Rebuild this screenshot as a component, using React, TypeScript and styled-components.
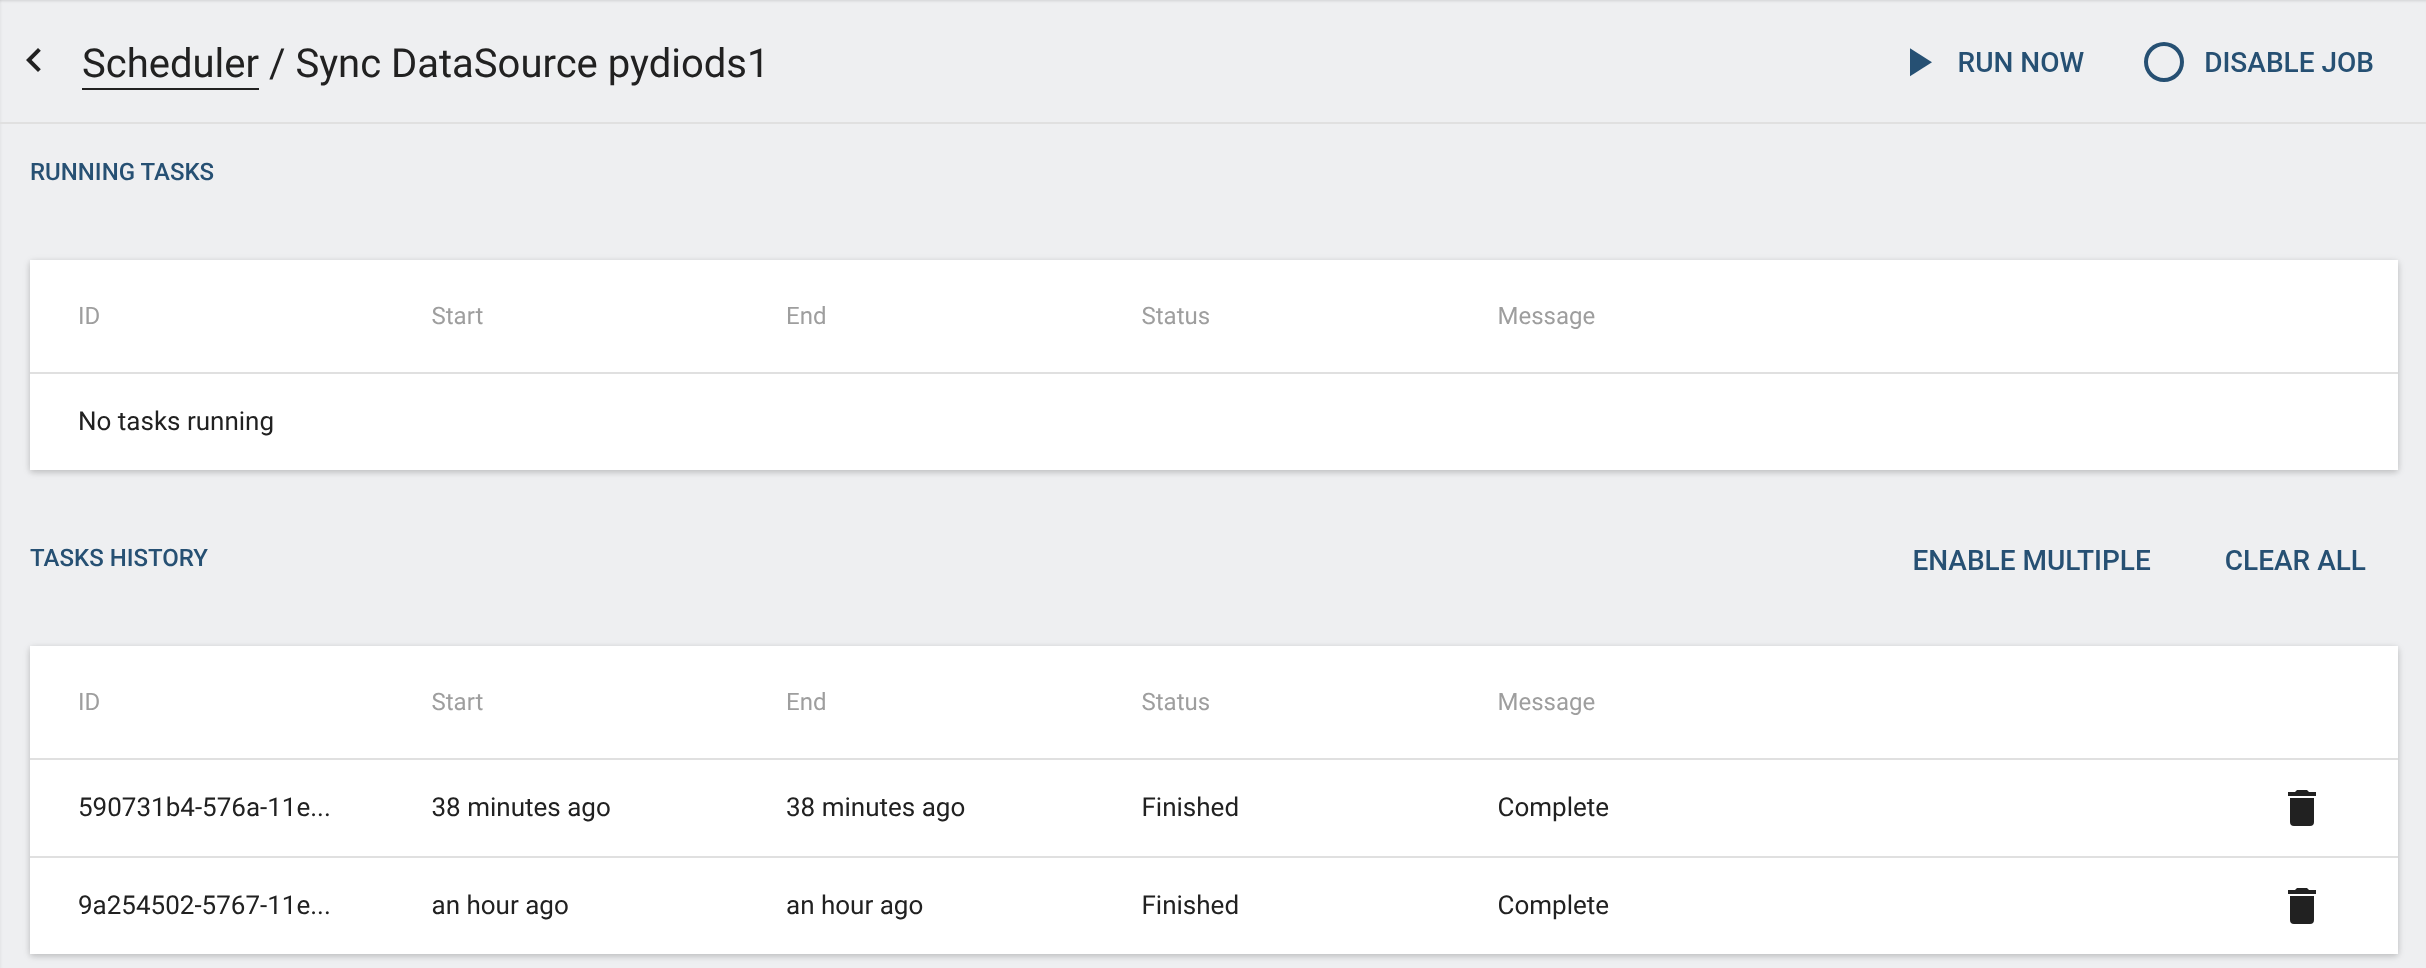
import React from 'react';
import styled, { createGlobalStyle } from 'styled-components';

const Colors = {
  Page: '#eeeff1',
  Line: '#e0e0e0',
  Brand: '#265073',
  Text: '#212121',
  Muted: '#9e9e9e',
};

const GlobalStyle = createGlobalStyle`
  html, body {
    margin: 0;
    padding: 0;
    background: ${Colors.Page};
  }
  body {
    font-family: Roboto, "Liberation Sans", sans-serif;
    color: ${Colors.Text};
    text-rendering: geometricPrecision;
    -webkit-font-smoothing: antialiased;
  }
`;

const Page = styled.div`
  height: 968px;
  overflow: hidden;
  box-sizing: border-box;
  will-change: transform;
  box-shadow: inset 0 3px 3px -2px rgba(0, 0, 0, 0.12), inset 3px 0 3px -2px rgba(0, 0, 0, 0.05);
`;

const Header = styled.header`
  display: flex;
  align-items: center;
  box-sizing: border-box;
  height: 124px;
  padding: 0 20px 0 10px;
  border-bottom: 2px solid ${Colors.Line};
`;

const IconSlot = styled.span`
  display: flex;
  flex: none;
  width: 48px;
  height: 48px;
  color: inherit;
`;

const BackIcon = styled(IconSlot)`
  margin-bottom: 2px;
`;

const Title = styled.h1`
  flex: 1;
  margin: 8px 0 0 24px;
  font-size: 40px;
  font-weight: 400;
  line-height: 48px;
  color: ${Colors.Text};
`;

const TitleLink = styled.span`
  display: inline-block;
  line-height: 48px;
  border-bottom: 2px solid ${Colors.Text};
`;

const HeaderActions = styled.div`
  display: flex;
  gap: 8px;
  margin-top: 2px;
`;

const Button = styled.button<{ $icon?: boolean }>`
  display: flex;
  align-items: center;
  height: 72px;
  padding: 0 32px 0 ${(props) => (props.$icon ? '16px' : '32px')};
  gap: 16px;
  border: 0;
  background: none;
  color: ${Colors.Brand};
  font-family: inherit;
  font-size: 28px;
  font-weight: 500;
  text-transform: uppercase;
  white-space: nowrap;
  cursor: pointer;
`;

const Section = styled.section`
  & + & {
    margin-top: 40px;
  }
`;

const SectionHead = styled.div`
  display: flex;
  justify-content: space-between;
  align-items: flex-start;
  box-sizing: border-box;
  height: 136px;
  padding: 0 28px 0 30px;
`;

const SectionTitle = styled.h2`
  margin: 32px 0 0;
  font-size: 24px;
  font-weight: 500;
  line-height: 32px;
  color: ${Colors.Brand};
  text-transform: uppercase;
`;

const SectionActions = styled.div`
  display: flex;
  gap: 10px;
  margin-top: 14px;
`;

const Card = styled.div`
  margin: 0 28px 0 30px;
  background: #fff;
  box-shadow: 0 2px 6px rgba(0, 0, 0, 0.12), 0 2px 8px rgba(0, 0, 0, 0.12);
`;

const Row = styled.div<{ $head?: boolean }>`
  display: grid;
  grid-template-columns: 353.5px 354.5px 355.5px 356px 1fr 120px;
  align-items: center;
  height: ${(props) => (props.$head ? '114px' : '98px')};
  box-sizing: border-box;
  border-bottom: 2px solid ${Colors.Line};

  &:last-child {
    height: 96px;
    border-bottom: 0;
  }
`;

const HeadCell = styled.div`
  padding-left: 48px;
  font-size: 24px;
  color: ${Colors.Muted};
  white-space: nowrap;
`;

const Cell = styled.div`
  padding-left: 48px;
  font-size: 26px;
  color: ${Colors.Text};
  white-space: nowrap;
`;

const DeleteCell = styled.div`
  display: flex;
  color: ${Colors.Text};
`;

const Icon = ({ d }: { d: string }) => (
  <svg viewBox="0 0 24 24" width="48" height="48" fill="currentColor">
    <path d={d} />
  </svg>
);

const ICON_BACK = 'M15.41,16.58L10.83,12L15.41,7.41L14,6L8,12L14,18L15.41,16.58Z';
const ICON_PLAY = 'M8,5.14V19.14L19,12.14L8,5.14Z';
const ICON_RADIO =
  'M12,20A8,8 0 0,1 4,12A8,8 0 0,1 12,4A8,8 0 0,1 20,12A8,8 0 0,1 12,20M12,2A10,10 0 0,0 2,12A10,10 0 0,0 12,22A10,10 0 0,0 22,12A10,10 0 0,0 12,2Z';
const ICON_DELETE =
  'M19,4H15.5L14.5,3H9.5L8.5,4H5V6H19V4M6,19A2,2 0 0,0 8,21H16A2,2 0 0,0 18,19V7H6V19Z';

const COLUMNS = ['ID', 'Start', 'End', 'Status', 'Message'];

const TASKS = [
  { id: '590731b4-576a-11e...', start: '38 minutes ago', end: '38 minutes ago', status: 'Finished', message: 'Complete' },
  { id: '9a254502-5767-11e...', start: 'an hour ago', end: 'an hour ago', status: 'Finished', message: 'Complete' },
];

function TableHead() {
  return (
    <Row $head>
      {COLUMNS.map((column) => (
        <HeadCell key={column}>{column}</HeadCell>
      ))}
    </Row>
  );
}

function App() {
  return (
    <Page>
      <GlobalStyle />
      <Header>
        <BackIcon>
          <Icon d={ICON_BACK} />
        </BackIcon>
        <Title>
          <TitleLink>Scheduler</TitleLink> / Sync DataSource pydiods1
        </Title>
        <HeaderActions>
          <Button $icon>
            <IconSlot>
              <Icon d={ICON_PLAY} />
            </IconSlot>
            Run now
          </Button>
          <Button $icon>
            <IconSlot>
              <Icon d={ICON_RADIO} />
            </IconSlot>
            Disable job
          </Button>
        </HeaderActions>
      </Header>

      <Section>
        <SectionHead>
          <SectionTitle>Running tasks</SectionTitle>
        </SectionHead>
        <Card>
          <TableHead />
          <Row>
            <Cell>No tasks running</Cell>
          </Row>
        </Card>
      </Section>

      <Section>
        <SectionHead>
          <SectionTitle>Tasks history</SectionTitle>
          <SectionActions>
            <Button>Enable multiple</Button>
            <Button>Clear all</Button>
          </SectionActions>
        </SectionHead>
        <Card>
          <TableHead />
          {TASKS.map((task) => (
            <Row key={task.id}>
              <Cell>{task.id}</Cell>
              <Cell>{task.start}</Cell>
              <Cell>{task.end}</Cell>
              <Cell>{task.status}</Cell>
              <Cell>{task.message}</Cell>
              <DeleteCell>
                <Icon d={ICON_DELETE} />
              </DeleteCell>
            </Row>
          ))}
        </Card>
      </Section>
    </Page>
  );
}

export default App;
